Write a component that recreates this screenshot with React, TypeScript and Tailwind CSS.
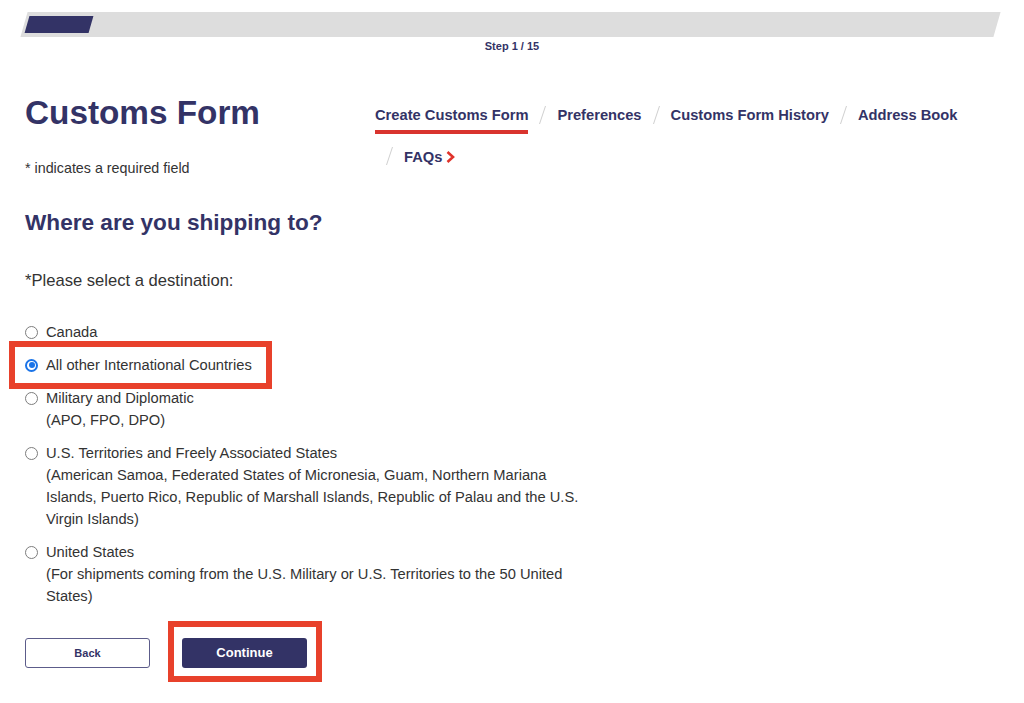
import type { ReactNode } from 'react';

const NAV = ['Create Customs Form', 'Preferences', 'Customs Form History', 'Address Book', 'FAQs'];

const OPTIONS: { id: string; label: string; note?: string }[] = [
  { id: 'canada', label: 'Canada' },
  { id: 'intl', label: 'All other International Countries' },
  { id: 'military', label: 'Military and Diplomatic', note: '(APO, FPO, DPO)' },
  {
    id: 'territories',
    label: 'U.S. Territories and Freely Associated States',
    note: '(American Samoa, Federated States of Micronesia, Guam, Northern Mariana Islands, Puerto Rico, Republic of Marshall Islands, Republic of Palau and the U.S. Virgin Islands)',
  },
  {
    id: 'us',
    label: 'United States',
    note: '(For shipments coming from the U.S. Military or U.S. Territories to the 50 United States)',
  },
];

function Slash() {
  return (
    <svg width="7" height="18" viewBox="0 0 7 18" className="mt-[0.5px] ml-[11px] shrink-0">
      <line x1="6.5" y1="0" x2="0.5" y2="18" stroke="#cfcfcf" strokeWidth="1" />
    </svg>
  );
}

function Radio({ checked }: { checked: boolean }) {
  return checked ? (
    <span className="mt-[4.5px] flex h-[13px] w-[13px] shrink-0 items-center justify-center rounded-full border-2 border-[#1b74e8] bg-white">
      <span className="h-[6px] w-[6px] rounded-full bg-[#1b74e8]" />
    </span>
  ) : (
    <span className="mt-[4.5px] h-[13px] w-[13px] shrink-0 rounded-full border border-[#7d7d7d] bg-white" />
  );
}

function Highlight({ className }: { className: string }) {
  return <span className={'pointer-events-none absolute border-[6px] border-[#e8412b] ' + className} />;
}

function NavItem({ label, first, active, children }: { label: string; first: boolean; active?: boolean; children?: ReactNode }) {
  return (
    <div className="flex items-start">
      {!first && <Slash />}
      <a
        href="#"
        className={
          'flex items-center text-[14.7px] font-bold leading-[20px] text-[#333366] ' +
          (first ? '' : 'ml-[11px] ') +
          (active ? 'border-b-[4px] border-[#d9342e] pb-[5px]' : '')
        }
      >
        {label}
        {children}
      </a>
    </div>
  );
}

export default function App() {
  return (
    <div className="min-h-screen bg-white font-['Liberation_Sans',Arial,sans-serif] text-[#333333]">
      {/* progress */}
      <div className="pt-[12px]">
        <div className="ml-[24px] h-[25px] w-[973px] -skew-x-[16deg] bg-[#dddddd] pt-[4px] pl-[2.5px]">
          <div className="h-[17px] w-[64px] bg-[#333366]" />
        </div>
        <p className="mt-[3px] text-center text-[11px] font-bold leading-[13px] text-[#333366]">Step 1 / 15</p>
      </div>

      <div className="px-[25px]">
        {/* header */}
        <div className="mt-[41px] flex">
          <div className="w-[350px] shrink-0">
            <h1 className="text-[33.3px] font-bold leading-[38px] text-[#333366]">Customs Form</h1>
            <p className="mt-[26px] text-[14.3px] leading-[20px]">* indicates a required field</p>
          </div>
          <nav className="mt-[11px] flex w-[620px] flex-wrap items-start gap-y-[1px]">
            {NAV.map((item, i) => (
              <NavItem key={item} label={item} first={i === 0} active={i === 0}>
                {item === 'FAQs' && (
                  <svg width="9" height="12" viewBox="0 0 9 12" className="ml-[4px]">
                    <polyline points="1.5,1 7,6 1.5,11" fill="none" stroke="#e0332b" strokeWidth="2.6" />
                  </svg>
                )}
              </NavItem>
            ))}
          </nav>
        </div>

        <h2 className="mt-[31px] text-[22.6px] font-bold leading-[28px] text-[#333366]">Where are you shipping to?</h2>
        <p className="mt-[33px] text-[16.6px] leading-[22px]">*Please select a destination:</p>

        <div className="mt-[29px] flex flex-col gap-[11px]">
          {OPTIONS.map((o) => (
            <label key={o.id} className="relative flex items-start gap-[8px] text-[14.7px] leading-[22px]">
              <Radio checked={o.id === 'intl'} />
              <span className="w-[545px]">
                <span className="block">{o.label}</span>
                {o.note && <span className="block">{o.note}</span>}
              </span>
              {o.id === 'intl' && <Highlight className="top-[-13px] left-[-16px] h-[48px] w-[263px]" />}
            </label>
          ))}
        </div>

        <div className="mt-[31px] flex gap-[32px] pb-[20px]">
          <button className="h-[30px] w-[125px] rounded-[3px] border border-[#5c5c8a] bg-white text-[11px] font-bold text-[#333366]">
            Back
          </button>
          <div className="relative">
            <button className="h-[30px] w-[125px] rounded-[3px] bg-[#333366] text-[13px] font-bold text-white">Continue</button>
            <Highlight className="top-[-17px] left-[-14px] h-[61px] w-[154px]" />
          </div>
        </div>
      </div>
    </div>
  );
}
